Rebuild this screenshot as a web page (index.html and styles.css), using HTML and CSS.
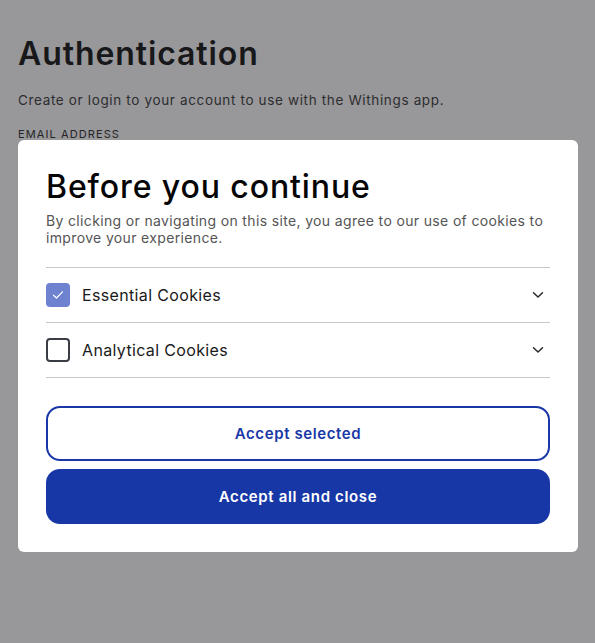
FILE: index.html
```html
<!DOCTYPE html>
<html lang="en">
<head>
<meta charset="utf-8">
<link rel="stylesheet" href="styles.css">
</head>
<body>
<main class="page">
  <h1 class="page-title">Authentication</h1>
  <p class="page-sub">Create or login to your account to use with the Withings app.</p>
  <label class="field-label">EMAIL ADDRESS</label>
</main>
<div class="overlay">
  <div class="modal">
    <h2 class="modal-title">Before you continue</h2>
    <p class="modal-desc">By clicking or navigating on this site, you agree to our use of cookies to improve your experience.</p>
    <ul class="cookie-list">
      <li class="cookie-row">
        <span class="box box-checked">
          <svg width="12" height="10" viewBox="0 0 12 10"><path d="M1.5 5.2 L4.5 8 L10.5 1.8" fill="none" stroke="#fff" stroke-width="1.2" stroke-linecap="round" stroke-linejoin="round"/></svg>
        </span>
        <span class="cookie-name">Essential Cookies</span>
        <svg class="chev" width="12" height="8" viewBox="0 0 12 8"><path d="M1.5 1.8 L6 6 L10.5 1.8" fill="none" stroke="#2a2a2a" stroke-width="1.5" stroke-linecap="round" stroke-linejoin="round"/></svg>
      </li>
      <li class="cookie-row">
        <span class="box"></span>
        <span class="cookie-name">Analytical Cookies</span>
        <svg class="chev" width="12" height="8" viewBox="0 0 12 8"><path d="M1.5 1.8 L6 6 L10.5 1.8" fill="none" stroke="#2a2a2a" stroke-width="1.5" stroke-linecap="round" stroke-linejoin="round"/></svg>
      </li>
    </ul>
    <div class="actions">
      <button class="btn btn-outline">Accept selected</button>
      <button class="btn btn-solid">Accept all and close</button>
    </div>
  </div>
</div>
</body>
</html>
```

FILE: styles.css
```css
* { box-sizing: border-box; }
html, body { margin: 0; padding: 0; }
body {
  width: 595px;
  height: 643px;
  background: #ffffff;
  font-family: "Inter", "Open Sans", sans-serif;
  color: #111;
  position: relative;
  overflow: hidden;
}
.page {
  padding: 36px 18px 0 18px;
}
.page-title {
  margin: 0;
  font-size: 32px;
  font-weight: 600;
  letter-spacing: 0.9px;
  color: #0a0a0a;
  line-height: 36px;
}
.page-sub {
  margin: 20px 0 0 0;
  font-size: 13.5px;
  line-height: 16px;
  letter-spacing: 0.65px;
  color: #333;
}
.field-label {
  display: block;
  margin-top: 19px;
  font-size: 11px;
  line-height: 14px;
  color: #222;
  letter-spacing: 1.1px;
}
.overlay {
  position: absolute;
  inset: 0;
  background: rgba(40, 40, 44, 0.48);
  padding: 140px 17px 0 18px;
}
.modal {
  background: #fff;
  border-radius: 6px;
  padding: 29px 28px 28px 28px;
}
.modal-title {
  margin: 0;
  font-size: 32px;
  font-weight: 500;
  line-height: 36px;
  letter-spacing: 0.9px;
  color: #050505;
}
.modal-desc {
  margin: 7px 0 0 0;
  font-size: 14px;
  line-height: 17px;
  letter-spacing: 0.35px;
  color: #555;
}
.cookie-list {
  list-style: none;
  margin: 21px 0 0 0;
  padding: 0;
  border-top: 1px solid #c8c8c8;
}
.cookie-row {
  display: flex;
  align-items: center;
  height: 55px;
  border-bottom: 1px solid #c8c8c8;
}
.box {
  width: 24px;
  height: 24px;
  border: 2px solid #3a3d46;
  border-radius: 4px;
  display: flex;
  align-items: center;
  justify-content: center;
  flex: none;
}
.box-checked {
  background: #6e82cf;
  border-color: #6e82cf;
}
.cookie-name {
  margin-left: 12px;
  font-size: 16px;
  letter-spacing: 0.35px;
  color: #1a1a1a;
  flex: 1;
}
.chev {
  margin-right: 6px;
}
.actions {
  margin-top: 28px;
  display: flex;
  flex-direction: column;
  gap: 8px;
}
.btn {
  height: 55px;
  border-radius: 14px;
  font-family: inherit;
  font-size: 15px;
  font-weight: 600;
  cursor: pointer;
}
.btn-outline {
  background: #fff;
  border: 2px solid #1937a6;
  color: #1937a6;
  letter-spacing: 0.6px;
}
.btn-solid {
  background: #1837a6;
  border: 2px solid #1837a6;
  color: #fff;
  letter-spacing: 0.65px;
}
```
